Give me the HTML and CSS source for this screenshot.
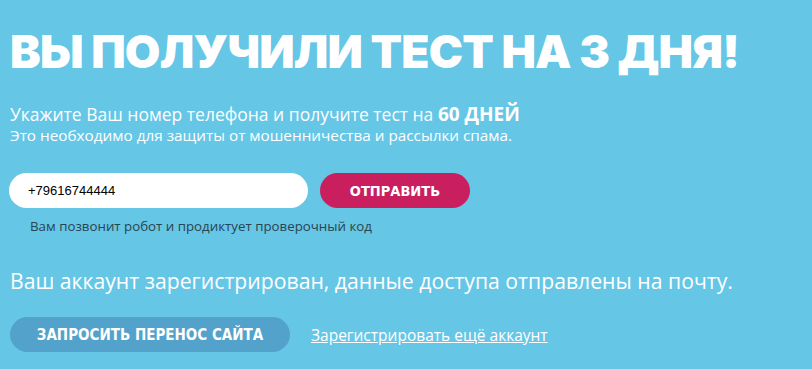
FILE: index.html
```html
<!DOCTYPE html>
<html lang="ru">
<head>
  <meta charset="UTF-8">
  <title>Тест на 3 дня</title>
  <link rel="stylesheet" href="styles.css">
</head>
<body>

<div class="page">
  <h1 class="title">ВЫ ПОЛУЧИЛИ ТЕСТ НА 3 ДНЯ!</h1>

  <p class="lead">Укажите Ваш номер телефона и получите тест на <b>60 ДНЕЙ</b></p>
  <p class="sub">Это необходимо для защиты от мошенничества и рассылки спама.</p>

  <div class="phone-row">
    <input type="text" class="phone-input" value="+79616744444">
    <button class="btn-send">ОТПРАВИТЬ</button>
  </div>
  <div class="hint">Вам позвонит робот и продиктует проверочный код</div>

  <p class="done">Ваш аккаунт зарегистрирован, данные доступа отправлены на почту.</p>

  <div class="actions">
    <button class="btn-move">ЗАПРОСИТЬ ПЕРЕНОС САЙТА</button>
    <a href="#" class="link-more">Зарегистрировать ещё аккаунт</a>
  </div>
</div>

</body>
</html>
```

FILE: styles.css
```css
html, body {
  margin: 0;
  height: 100%;
}
body {
  background: #65c6e6;
  color: #fff;
  font-family: 'Open Sans', 'DejaVu Sans', sans-serif;
}
.page {
  padding: 24px 0 0 10px;
}
.title {
  margin: 0;
  font-family: 'Inter', sans-serif;
  font-weight: 900;
  font-size: 46px;
  line-height: 54px;
  letter-spacing: -0.8px;
}
.lead {
  margin: 25px 0 0;
  font-size: 17.5px;
  line-height: 22px;
}
.lead b {
  font-size: 19px;
  font-weight: 700;
}
.sub {
  margin: 0;
  font-size: 15.3px;
  line-height: 20px;
}
.phone-row {
  display: flex;
  align-items: center;
  gap: 12px;
  margin-top: 28px;
}
.phone-input {
  width: 299px;
  height: 35px;
  box-sizing: border-box;
  margin-left: -1px;
  padding: 0 0 0 19px;
  border: none;
  border-radius: 18px;
  background: #fff;
  color: #000;
  font-family: 'Liberation Sans', Arial, sans-serif;
  font-size: 13px;
  outline: none;
}
.btn-send {
  width: 150px;
  height: 35px;
  border: none;
  border-radius: 18px;
  background: #c91f5f;
  color: #fff;
  font-family: 'DejaVu Sans Condensed', 'DejaVu Sans', sans-serif;
  font-weight: 700;
  font-size: 14.5px;
}
.hint {
  margin: 10px 0 0 20px;
  color: #2a4450;
  font-size: 13.3px;
  line-height: 17px;
}
.done {
  margin: 33px 0 0;
  font-size: 21.2px;
  line-height: 26px;
}
.actions {
  display: flex;
  align-items: center;
  gap: 21px;
  margin-top: 23px;
}
.btn-move {
  width: 280px;
  height: 35px;
  border: none;
  border-radius: 18px;
  background: #52a2cb;
  color: #fff;
  font-family: 'DejaVu Sans Condensed', 'DejaVu Sans', sans-serif;
  font-weight: 700;
  font-size: 15px;
}
.link-more {
  color: #fff;
  font-size: 15.5px;
}
```
